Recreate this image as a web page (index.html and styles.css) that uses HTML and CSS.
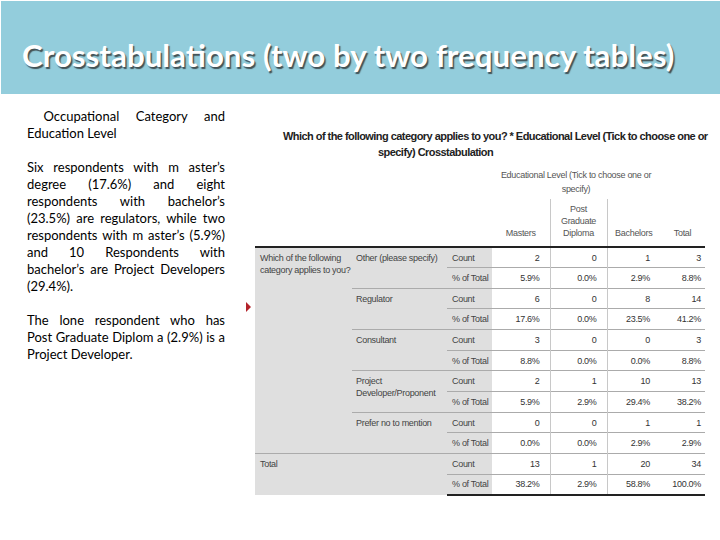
FILE: index.html
```html
<!DOCTYPE html>
<html>
<head>
<meta charset="utf-8">
<link rel="stylesheet" href="styles.css">
</head>
<body>
<header class="title-bar">
  <h1 class="title">Crosstabulations (two by two frequency tables)</h1>
</header>
<main class="content">
  <section class="notes">
    <p class="para">
      <span class="ln j">&nbsp;Occupational Category and</span>
      <span class="ln">Education Level</span>
    </p>
    <p class="para">
      <span class="ln j">Six respondents with m aster’s</span>
      <span class="ln j">degree (17.6%) and eight</span>
      <span class="ln j">respondents with bachelor’s</span>
      <span class="ln j">(23.5%) are regulators, while two</span>
      <span class="ln j">respondents with m aster’s (5.9%)</span>
      <span class="ln j">and 10 Respondents with</span>
      <span class="ln j">bachelor’s are Project Developers</span>
      <span class="ln">(29.4%).</span>
    </p>
    <p class="para">
      <span class="ln j">The lone respondent who has</span>
      <span class="ln j">Post Graduate Diplom a (2.9%) is a</span>
      <span class="ln">Project Developer.</span>
    </p>
  </section>
  <div class="marker"></div>
  <section class="output">
    <div class="caption">
      <span class="cap1">Which of the following category applies to you? * Educational Level (Tick to choose one or</span>
      <span class="cap2">specify) Crosstabulation</span>
    </div>
    <table class="xtab">
      <colgroup>
        <col class="c-q"><col class="c-cat"><col class="c-stat">
        <col class="c-m"><col class="c-p"><col class="c-b"><col class="c-t">
      </colgroup>
      <thead>
        <tr class="h1">
          <th colspan="3" rowspan="2" class="blank"></th>
          <th colspan="3" class="group">Educational Level (Tick to choose one or<br>specify)</th>
          <th class="blank"></th>
        </tr>
        <tr class="h2">
          <th class="colh">Masters</th>
          <th class="colh vl">Post<br>Graduate<br>Diploma</th>
          <th class="colh vl">Bachelors</th>
          <th class="colh">Total</th>
        </tr>
      </thead>
      <tbody>
        <tr>
          <td rowspan="10" class="lab q">Which of the following<br>category applies to you?</td>
          <td rowspan="2" class="lab cat">Other (please specify)</td>
          <td class="lab stat">Count</td>
          <td class="num">2</td><td class="num vl">0</td><td class="num vl">1</td><td class="num tot">3</td>
        </tr>
        <tr class="sub">
          <td class="lab stat">% of Total</td>
          <td class="num">5.9%</td><td class="num vl">0.0%</td><td class="num vl">2.9%</td><td class="num tot">8.8%</td>
        </tr>
        <tr class="grp">
          <td rowspan="2" class="lab cat">Regulator</td>
          <td class="lab stat">Count</td>
          <td class="num">6</td><td class="num vl">0</td><td class="num vl">8</td><td class="num tot">14</td>
        </tr>
        <tr class="sub">
          <td class="lab stat">% of Total</td>
          <td class="num">17.6%</td><td class="num vl">0.0%</td><td class="num vl">23.5%</td><td class="num tot">41.2%</td>
        </tr>
        <tr class="grp">
          <td rowspan="2" class="lab cat">Consultant</td>
          <td class="lab stat">Count</td>
          <td class="num">3</td><td class="num vl">0</td><td class="num vl">0</td><td class="num tot">3</td>
        </tr>
        <tr class="sub">
          <td class="lab stat">% of Total</td>
          <td class="num">8.8%</td><td class="num vl">0.0%</td><td class="num vl">0.0%</td><td class="num tot">8.8%</td>
        </tr>
        <tr class="grp">
          <td rowspan="2" class="lab cat">Project<br>Developer/Proponent</td>
          <td class="lab stat">Count</td>
          <td class="num">2</td><td class="num vl">1</td><td class="num vl">10</td><td class="num tot">13</td>
        </tr>
        <tr class="sub">
          <td class="lab stat">% of Total</td>
          <td class="num">5.9%</td><td class="num vl">2.9%</td><td class="num vl">29.4%</td><td class="num tot">38.2%</td>
        </tr>
        <tr class="grp">
          <td rowspan="2" class="lab cat">Prefer no to mention</td>
          <td class="lab stat">Count</td>
          <td class="num">0</td><td class="num vl">0</td><td class="num vl">1</td><td class="num tot">1</td>
        </tr>
        <tr class="sub">
          <td class="lab stat">% of Total</td>
          <td class="num">0.0%</td><td class="num vl">0.0%</td><td class="num vl">2.9%</td><td class="num tot">2.9%</td>
        </tr>
        <tr class="total">
          <td colspan="2" rowspan="2" class="lab q">Total</td>
          <td class="lab stat">Count</td>
          <td class="num">13</td><td class="num vl">1</td><td class="num vl">20</td><td class="num tot">34</td>
        </tr>
        <tr class="sub last">
          <td class="lab stat">% of Total</td>
          <td class="num">38.2%</td><td class="num vl">2.9%</td><td class="num vl">58.8%</td><td class="num tot">100.0%</td>
        </tr>
      </tbody>
    </table>
  </section>
</main>
</body>
</html>
```
FILE: styles.css
```css
html, body {
  margin: 0;
  padding: 0;
  background: #ffffff;
}

body {
  width: 720px;
  height: 540px;
  overflow: hidden;
  font-family: "Lato", "Open Sans", sans-serif;
}

.title-bar {
  margin: 1px 0 0 1px;
  height: 93px;
  box-sizing: border-box;
  background: #93cddc;
  padding: 35px 0 0 21px;
}

.title {
  margin: 0;
  font-family: "Lato", "Open Sans", sans-serif;
  font-weight: 700;
  font-size: 31.3px;
  line-height: 38px;
  color: #ffffff;
  white-space: nowrap;
  text-shadow: 1.5px 1.5px 1px rgba(40, 40, 40, 0.75);
}

.content {
  display: flex;
  align-items: flex-start;
}

.notes {
  width: 198px;
  margin: 14px 0 0 27px;
  font-family: "Lato", "Open Sans", sans-serif;
  font-size: 13px;
  line-height: 17px;
  color: #000;
}

.para {
  margin: 0 0 17px 0;
}

.ln {
  display: block;
  white-space: nowrap;
  text-align: left;
}

.ln.j {
  text-align: justify;
  text-align-last: justify;
}

.marker {
  width: 0;
  height: 0;
  margin: 208px 0 0 21px;
  border-left: 5px solid #b3232a;
  border-top: 5px solid transparent;
  border-bottom: 5px solid transparent;
}

.output {
  margin-left: 4px;
  width: 450px;
}

.caption {
  margin-top: 34px;
  font-family: "Liberation Sans", "Arimo", sans-serif;
  font-weight: 700;
  font-size: 11px;
  letter-spacing: -0.55px;
  line-height: 16px;
  color: #222;
  white-space: nowrap;
}

.cap1, .cap2 {
  display: block;
}

.cap1 { padding-left: 28px; }
.cap2 { padding-left: 123px; }

.xtab {
  width: 450px;
  table-layout: fixed;
  border-collapse: collapse;
  font-family: "Liberation Sans", "Arimo", sans-serif;
  font-size: 9px;
  letter-spacing: -0.3px;
  color: #3a3a3a;
  white-space: nowrap;
}

.c-q { width: 97px; }
.c-cat { width: 95px; }
.c-stat { width: 45px; }
.c-m { width: 58px; }
.c-p { width: 57px; }
.c-b { width: 53px; }
.c-t { width: 45px; }

.xtab th {
  font-weight: normal;
  padding: 0;
  color: #555;
}

.h1 th.group {
  height: 39px;
  box-sizing: border-box;
  padding-top: 8px;
  vertical-align: top;
  text-align: center;
  line-height: 14px;
}

.h2 th {
  height: 48px;
  box-sizing: border-box;
  vertical-align: bottom;
  text-align: center;
  line-height: 12px;
  padding-bottom: 7px;
}

.h2 th.vl {
  border-left: 1px solid #c8c8c8;
}

.xtab tbody tr {
  height: 20.67px;
}

.xtab tbody tr:first-child td {
  border-top: 2px solid #222;
}

.xtab tbody tr.last td {
  border-bottom: 2px solid #222;
}

.xtab td {
  padding: 0;
}

.xtab td.lab {
  background: #dfdfdf;
  text-align: left;
  color: #444;
}

.xtab td.q, .xtab td.cat {
  vertical-align: top;
  padding: 4px 0 0 5px;
  line-height: 12px;
}

.xtab td.cat {
  padding-left: 4px;
}

.xtab td.stat {
  padding-left: 5px;
  vertical-align: middle;
}

.xtab td.num {
  text-align: right;
  padding-right: 10px;
  vertical-align: middle;
  color: #333;
}

.xtab td.tot {
  padding-right: 4px;
}

.xtab td.vl {
  border-left: 1px solid #c8c8c8;
}

.xtab tr.sub td,
.xtab tr.grp td,
.xtab tr.total td {
  border-top: 1px solid #ababab;
}
```
